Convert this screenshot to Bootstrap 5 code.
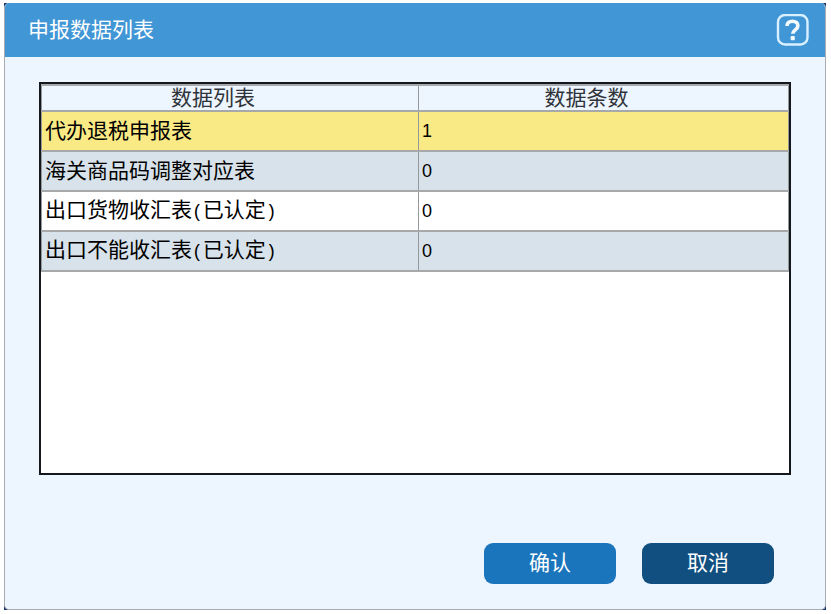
<!DOCTYPE html>
<html lang="zh-CN">
<head>
<meta charset="utf-8">
<meta name="viewport" content="width=device-width, initial-scale=1">
<title>申报数据列表</title>
<link rel="stylesheet" href="https://cdn.jsdelivr.net/npm/bootstrap@5.3.0/dist/css/bootstrap.min.css">
<style>
body { background: #fff; color: #000; font-family: "Liberation Sans", "Noto Sans CJK SC", sans-serif; font-size: 21px; line-height: 26px; }
.page { padding: 3px 5px 4px 4px; }
.frame { background: #12306b; }
.window { background: #edf5fe; border-radius: 5px; overflow: hidden; border: 1px solid #a9adb3; border-top: 0; }
.title-bar { background: #4196d5; height: 54px; padding: 0 17px 0 24px; margin: 0 -1px; color: #fff; }
.title-bar h1 { font-size: 21px; line-height: 26px; font-weight: 400; }
.window-body { padding: 25px 34px; }
.data-box { background: #fff; border: 2px solid #14181d; }
.data-grid { width: 100%; table-layout: fixed; border-collapse: collapse; }
.data-grid th, .data-grid td { border: 1px solid #96999c; border-bottom: 2px solid #a6a8aa; font-weight: 400; }
.data-grid th { border-top: 2px solid #a6a8aa; background: #edf5fe; color: #30343a; height: 26px; line-height: 24px; text-align: center; padding: 0 34px 0 0; }
.data-grid th:first-child { width: 377px; }
.data-grid td { height: 40px; padding: 0 3px; }
.data-grid .picked td { background: #faea86; }
.data-grid .shaded td { background: #d8e2ea; }
.data-grid .count { font-size: 18px; }
.paren { font-family: "Liberation Mono", monospace; font-size: 18px; }
.actions { padding: 68px 17px 0 0; gap: 26px; }
.action { width: 132px; height: 41px; border: 0; border-radius: 9px; padding: 0 0 2px; color: #fff; font-size: 21px; line-height: 26px; }
.action-ok { background: #1b75bc; }
.action-cancel { background: #114f80; }
.action:hover { color: #fff; background: #2b83c8; }
</style>
<script defer src="https://cdn.jsdelivr.net/npm/bootstrap@5.3.0/dist/js/bootstrap.bundle.min.js"></script>
</head>
<body>
<main class="page min-vh-100 d-flex">
  <div class="frame flex-grow-1 d-flex">
    <section class="window flex-grow-1 d-flex flex-column" aria-labelledby="window-title">
      <header class="title-bar d-flex align-items-center justify-content-between">
        <h1 class="m-0" id="window-title">申报数据列表</h1>
        <button type="button" class="btn p-0 border-0 d-flex" aria-label="帮助">
          <svg width="33" height="33" viewBox="0 0 33 33" fill="none" aria-hidden="true">
            <rect x="2" y="1" width="29.500" height="29.500" rx="7" stroke="#d9f0ff" stroke-width="2.400"/>
            <path d="M11 12C11 8.900 13.200 7.300 16.500 7.300c3.200 0 5.400 1.700 5.400 4.500 0 3.900-5.200 4.100-5.200 8" stroke="#f4fbff" stroke-width="3.600"/>
            <rect x="14.600" y="22" width="4.200" height="4.200" rx="1" fill="#f4fbff"/>
          </svg>
        </button>
      </header>
      <div class="window-body flex-grow-1 d-flex flex-column">
        <div class="data-box flex-grow-1">
          <table class="data-grid">
            <thead><tr><th scope="col">数据列表</th><th scope="col">数据条数</th></tr></thead>
            <tbody>
              <tr class="picked"><td>代办退税申报表</td><td class="count">1</td></tr>
              <tr class="shaded"><td>海关商品码调整对应表</td><td class="count">0</td></tr>
              <tr><td>出口货物收汇表<span class="paren">(</span>已认定<span class="paren">)</span></td><td class="count">0</td></tr>
              <tr class="shaded"><td>出口不能收汇表<span class="paren">(</span>已认定<span class="paren">)</span></td><td class="count">0</td></tr>
            </tbody>
          </table>
        </div>
        <div class="actions d-flex justify-content-end">
          <button type="button" class="btn action action-ok">确认</button>
          <button type="button" class="btn action action-cancel">取消</button>
        </div>
      </div>
    </section>
  </div>
</main>
</body>
</html>
